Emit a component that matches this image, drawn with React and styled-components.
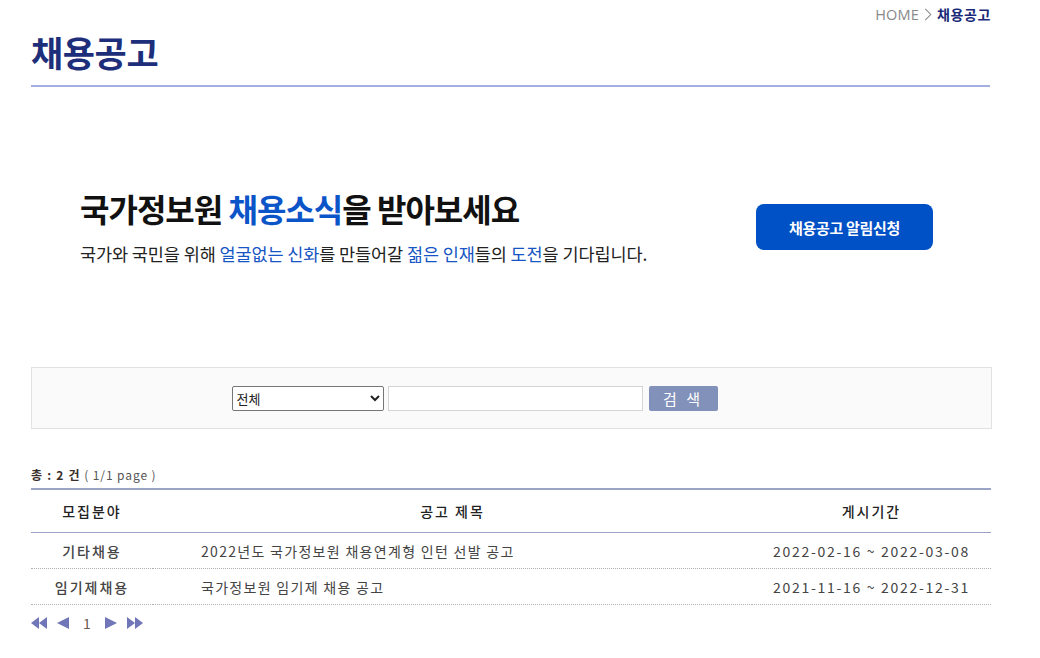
import React from "react";
import styled, { createGlobalStyle } from "styled-components";

const GlobalStyle = createGlobalStyle`
  body {
    margin: 0;
    background: #ffffff;
    font-family: "Noto Sans CJK KR", "Noto Sans", sans-serif;
    color: #333;
  }
`;

const rows = [
  { kind: "기타채용", title: "2022년도 국가정보원 채용연계형 인턴 선발 공고", period: "2022-02-16 ~ 2022-03-08" },
  { kind: "임기제채용", title: "국가정보원 임기제 채용 공고", period: "2021-11-16 ~ 2022-12-31" },
];

const App = () => {
  return (
    <Page>
      <GlobalStyle />
      <Breadcrumb>
        <span>HOME</span>
        <Chevron viewBox="0 0 8 14">
          <path d="M1 1l6 6-6 6" fill="none" stroke="#888" strokeWidth="1.1" />
        </Chevron>
        <Current>채용공고</Current>
      </Breadcrumb>
      <Title>채용공고</Title>

      <Banner>
        <BannerText>
          <Headline>
            국가정보원 <Blue>채용소식</Blue>을 받아보세요
          </Headline>
          <Sub>
            국가와 국민을 위해 <SubBlue>얼굴없는 신화</SubBlue>를 만들어갈{" "}
            <SubBlue>젊은 인재</SubBlue>들의 <SubBlue>도전</SubBlue>을 기다립니다.
          </Sub>
        </BannerText>
        <AlertButton>채용공고 알림신청</AlertButton>
      </Banner>

      <SearchBox>
        <Select defaultValue="all">
          <option value="all">전체</option>
          <option value="title">제목</option>
        </Select>
        <SearchInput type="text" />
        <SearchButton>검 색</SearchButton>
      </SearchBox>

      <Total>
        <b>총 : 2 건</b> ( 1/1 page )
      </Total>

      <Table>
        <colgroup>
          <col style={{ width: 122 }} />
          <col />
          <col style={{ width: 239 }} />
        </colgroup>
        <thead>
          <tr>
            <Th>모집분야</Th>
            <Th>공고 제목</Th>
            <Th>게시기간</Th>
          </tr>
        </thead>
        <tbody>
          {rows.map((r) => (
            <tr key={r.title}>
              <Td $bold $spacing="2px">{r.kind}</Td>
              <Td $left $spacing="1.3px">{r.title}</Td>
              <Td $spacing="1.7px">{r.period}</Td>
            </tr>
          ))}
        </tbody>
      </Table>

      <Pager>
        <PageIcon viewBox="0 0 16 12">
          <path d="M8 0v12L0 6z M16 0v12L8 6z" />
        </PageIcon>
        <PageIcon viewBox="0 0 12 12" $small>
          <path d="M12 0v12L0 6z" />
        </PageIcon>
        <PageNum>1</PageNum>
        <PageIcon viewBox="0 0 12 12" $small>
          <path d="M0 0v12l12-6z" />
        </PageIcon>
        <PageIcon viewBox="0 0 16 12">
          <path d="M0 0v12l8-6z M8 0v12l8-6z" />
        </PageIcon>
      </Pager>
    </Page>
  );
};

const Page = styled.div`
  width: 961px;
  margin-left: 31px;
  padding-bottom: 20px;
`;

const Breadcrumb = styled.div`
  display: flex;
  justify-content: flex-end;
  align-items: center;
  gap: 5px;
  padding-top: 5px;
  padding-right: 1px;
  height: 18px;
  font-size: 14px;
  color: #888;
  font-family: "Noto Sans CJK KR", sans-serif;
  font-weight: 300;

  span:first-child {
    font-family: "Open Sans", sans-serif;
    font-weight: 400;
    font-size: 14.5px;
    letter-spacing: 0.2px;
  }
`;

const Chevron = styled.svg`
  width: 8px;
  height: 13px;
`;

const Current = styled.span`
  color: #1a2a78;
  font-weight: 700;
  letter-spacing: 0.6px;
`;

const Title = styled.h1`
  margin: 0;
  padding: 7px 0 11px;
  font-size: 35px;
  line-height: 44px;
  font-weight: 700;
  color: #1d2f7a;
  letter-spacing: -0.4px;
  border-bottom: 2px solid #a2afdf;
  width: 959px;
`;

const Banner = styled.div`
  display: flex;
  justify-content: space-between;
  align-items: center;
  padding: 100px 59px 100px 49px;
  height: 84px;
`;

const BannerText = styled.div`
  display: flex;
  flex-direction: column;
  gap: 14px;
  margin-top: -4px;
`;

const Headline = styled.h2`
  margin: 0;
  font-size: 32px;
  line-height: 40px;
  font-weight: 700;
  color: #111;
  letter-spacing: -1px;
`;

const Blue = styled.span`
  color: #0b55c9;
`;

const Sub = styled.p`
  margin: 0;
  font-size: 17.5px;
  line-height: 24px;
  color: #222;
  letter-spacing: -0.1px;
`;

const SubBlue = styled.span`
  color: #1555c4;
`;

const AlertButton = styled.button`
  width: 177px;
  height: 46px;
  border: none;
  border-radius: 8px;
  background: #0050c6;
  color: #fff;
  font-family: "Noto Sans CJK KR", sans-serif;
  font-size: 15px;
  font-weight: 700;
  letter-spacing: -0.3px;
  margin-top: -4px;
`;

const SearchBox = styled.div`
  display: flex;
  justify-content: center;
  align-items: center;
  gap: 4px;
  height: 60px;
  padding-right: 74px;
  background: #fafafa;
  border: 1px solid #e2e2e2;
  margin-top: -4px;
`;

const Select = styled.select`
  width: 152px;
  height: 25px;
  border: 1px solid #767676;
  border-radius: 2px;
  font-family: "Noto Sans CJK KR", sans-serif;
  font-size: 13px;
  color: #222;
  background: #fff;
  padding: 0;
`;

const SearchInput = styled.input`
  width: 251px;
  height: 21px;
  border: 1px solid #d4d4d4;
  padding: 1px;
  margin-right: 2px;
  background: #fff;
`;

const SearchButton = styled.button`
  width: 69px;
  height: 25px;
  border: none;
  border-radius: 2px;
  background: #8191b9;
  color: #fff;
  font-family: "Noto Sans CJK KR", sans-serif;
  font-size: 15px;
  letter-spacing: 3px;
`;

const Total = styled.div`
  margin-top: 37px;
  font-size: 12px;
  color: #555;
  height: 18px;
  line-height: 18px;
  letter-spacing: 0.9px;

  b {
    color: #3a2e2a;
    font-weight: 700;
    letter-spacing: 1.2px;
  }
`;

const Table = styled.table`
  width: 960px;
  margin-top: 4px;
  border-collapse: collapse;
  border-top: 2px solid #9aa4c6;
  table-layout: fixed;
`;

const Th = styled.th`
  height: 42px;
  padding: 0;
  font-size: 14px;
  font-weight: 500;
  color: #222;
  letter-spacing: 2px;
  border-bottom: 1px solid #9aa4c6;
  text-align: center;
`;

const Td = styled.td`
  height: 35px;
  padding: 0;
  padding-left: ${(p) => (p.$left ? "48px" : "0")};
  font-size: 14px;
  color: #444;
  font-weight: ${(p) => (p.$bold ? 500 : 400)};
  letter-spacing: ${(p) => p.$spacing};
  text-align: ${(p) => (p.$left ? "left" : "center")};
  border-bottom: 1px dotted #b0b0b0;
  white-space: nowrap;
`;

const Pager = styled.div`
  display: flex;
  align-items: center;
  gap: 10px;
  height: 36px;
`;

const PageIcon = styled.svg`
  width: ${(p) => (p.$small ? "12px" : "16px")};
  height: 12px;
  fill: #7076b8;
`;

const PageNum = styled.span`
  font-size: 14px;
  color: #6a5a50;
  padding: 0 4px;
`;

export default App;
